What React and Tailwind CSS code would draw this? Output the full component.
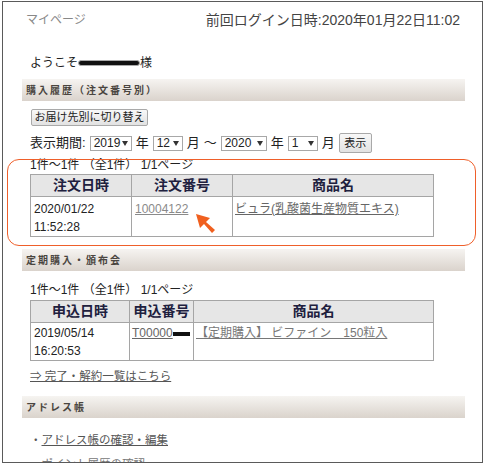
import React from "react";

const FONT = { fontFamily: '"Liberation Sans", "Noto Sans CJK JP", sans-serif' };

function Bar({ children }) {
  return (
    <div className="ml-[19px] mr-[17px] h-[22px] flex items-center pl-[4px] bg-linear-to-b from-[#f6f4f1] to-[#dad3cc] text-[10px] font-bold tracking-[2px] text-[#4a4540]">
      {children}
    </div>
  );
}

function Select({ value, w }) {
  return (
    <span className={`inline-flex h-[15px] items-center justify-between border border-[#a8a8a8] bg-white pl-[3px] pr-[3px] text-[12px] leading-none text-[#222] ${w}`}>
      <span>{value}</span>
      <svg width="6" height="5" viewBox="0 0 6 5"><polygon points="0,0 6,0 3,5" fill="#333" /></svg>
    </span>
  );
}

function Btn({ children, cls }) {
  return (
    <span className={`inline-flex items-center justify-center border border-[#a9a9a9] rounded-[2px] bg-linear-to-b from-[#f8f8f8] to-[#e2e2e2] text-[11px] text-[#222] ${cls}`}>
      {children}
    </span>
  );
}

export default function App() {
  return (
    <div className="w-[484px] h-[467px] bg-white" style={FONT}>
      <div className="relative ml-[2px] mt-[1px] w-[481px] h-[462px] border border-[#5a5a5a] overflow-hidden">
        {/* top row */}
        <div className="mt-[9px] h-[18px] flex items-center justify-between pl-[23px] pr-[22px]">
          <span className="text-[12px] text-[#888]">マイページ</span>
          <span className="text-[14px] text-[#444]">前回ログイン日時:2020年01月22日11:02</span>
        </div>
        <div className="mt-[25px] h-[18px] flex items-center pl-[27px] text-[12px] text-[#222]">
          <span>ようこそ</span>
          <span className="inline-block w-[62px] h-[6px] bg-[#111] rounded-full border border-[#aaa]" />
          <span>様</span>
        </div>

        <div className="mt-[7px]"><Bar>購入履歴（注文番号別）</Bar></div>

        <div className="mt-[8px] pl-[28px] flex">
          <Btn cls="h-[17px] w-[117px]">お届け先別に切り替え</Btn>
        </div>

        <div className="mt-[7px] h-[20px] pl-[27px] flex items-center gap-[4px] text-[13px] text-[#222]">
          <span>表示期間:</span>
          <Select value="2019" w="w-[42px]" />
          <span>年</span>
          <Select value="12" w="w-[30px]" />
          <span>月</span>
          <span>～</span>
          <Select value="2020" w="w-[46px]" />
          <span>年</span>
          <Select value="1" w="w-[30px]" />
          <span>月</span>
          <Btn cls="h-[20px] w-[33px]">表示</Btn>
        </div>

        <div className="mt-[5px] h-[14px] pl-[27px] text-[12px] leading-[14px] text-[#222]">1件～1件 （全1件） 1/1ページ</div>

        <table className="mt-[2px] ml-[27px] w-[404px] border-collapse text-[12px] text-[#222]">
          <thead>
            <tr className="h-[22px] bg-[#e6e6e6]">
              <th className="w-[101px] border border-[#a5a5a5] text-[14px] font-bold text-[#20203e]">注文日時</th>
              <th className="w-[101px] border border-[#a5a5a5] text-[14px] font-bold text-[#20203e]">注文番号</th>
              <th className="border border-[#a5a5a5] text-[14px] font-bold text-[#20203e]">商品名</th>
            </tr>
          </thead>
          <tbody>
            <tr className="h-[39px]">
              <td className="border border-[#a5a5a5] align-top pl-[3px] pt-[3px] leading-[18px] font-normal">2020/01/22<br />11:52:28</td>
              <td className="border border-[#a5a5a5] align-top pl-[3px] pt-[3px] leading-[18px]"><span className="underline text-[#8a8a8a]">10004122</span></td>
              <td className="border border-[#a5a5a5] align-top pl-[2px] pt-[3px] leading-[18px]"><span className="underline text-[#666]">ビュラ(乳酸菌生産物質エキス)</span></td>
            </tr>
          </tbody>
        </table>

        <div className="mt-[12px]"><Bar>定期購入・頒布会</Bar></div>

        <div className="mt-[12px] h-[14px] pl-[27px] text-[12px] leading-[14px] text-[#222]">1件～1件 （全1件） 1/1ページ</div>

        <table className="mt-[3px] ml-[27px] w-[404px] border-collapse text-[12px] text-[#222]">
          <thead>
            <tr className="h-[22px] bg-[#e6e6e6]">
              <th className="w-[99px] border border-[#a5a5a5] text-[14px] font-bold text-[#20203e]">申込日時</th>
              <th className="w-[64px] border border-[#a5a5a5] text-[14px] font-bold text-[#20203e]">申込番号</th>
              <th className="border border-[#a5a5a5] text-[14px] font-bold text-[#20203e]">商品名</th>
            </tr>
          </thead>
          <tbody>
            <tr className="h-[38px]">
              <td className="border border-[#a5a5a5] align-top pl-[3px] pt-[1px] leading-[18px]">2019/05/14<br />16:20:53</td>
              <td className="border border-[#a5a5a5] align-top pl-[2px] pt-[1px] leading-[18px] whitespace-nowrap">
                <span className="underline text-[#666]">T00000</span><span className="inline-block w-[17px] h-[4px] bg-[#111] align-middle" />
              </td>
              <td className="border border-[#a5a5a5] align-top pl-[2px] pt-[1px] leading-[18px]"><span className="underline text-[#777]">【定期購入】 ビファイン　150粒入</span></td>
            </tr>
          </tbody>
        </table>

        <div className="mt-[7px] h-[18px] pl-[27px] flex items-center text-[11.5px]">
          <span className="underline text-[#555]">⇒ 完了・解約一覧はこちら</span>
        </div>

        <div className="mt-[10px]"><Bar>アドレス帳</Bar></div>

        <div className="mt-[14px] h-[18px] pl-[27px] flex items-center text-[11.5px] text-[#555]">
          <span>・</span><span className="underline">アドレス帳の確認・編集</span>
        </div>
        <div className="mt-[6px] h-[18px] pl-[27px] flex items-center text-[11.5px] text-[#777]">
          <span>・</span><span className="underline">ポイント履歴の確認</span>
        </div>

        {/* annotation overlay */}
        <div className="absolute left-[4px] top-[157px] w-[469px] h-[87px] rounded-[12px] border border-[#ef5f2a]" />
        <svg className="absolute left-[192px] top-[211px]" width="22" height="22" viewBox="0 0 22 22">
          <polygon points="1,1 15,5 11,9 20,17 17,20 9,11 5,15" fill="#f0601f" />
        </svg>
      </div>
    </div>
  );
}
